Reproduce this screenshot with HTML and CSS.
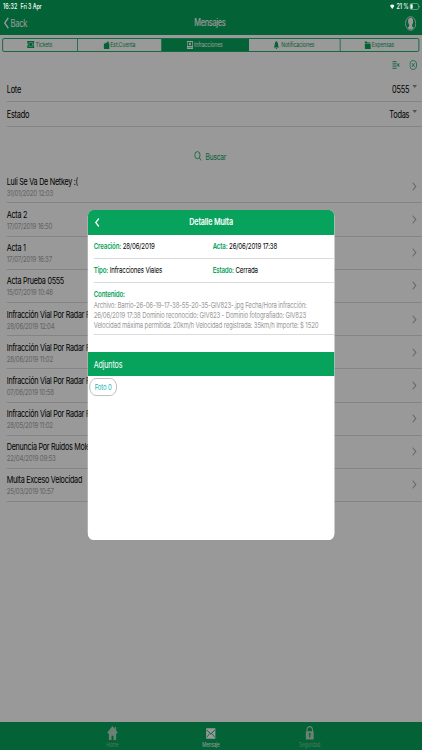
FILE: index.html
```html
<!DOCTYPE html>
<html lang="es">
<head>
<meta charset="utf-8">
<title>Mensajes</title>
<link rel="stylesheet" href="styles.css">
</head>
<body>
<div class="app">
  <header class="top">
    <div class="status"><span class="time">16:32</span><span class="date">Fri 3 Apr</span>
      <svg class="wifi" viewBox="0 0 10 8"><path d="M0 2.6Q5-1.6 10 2.6L5 8Z"/></svg>
      <span class="pct">21 %</span>
      <svg class="battery" viewBox="0 0 28 14"><rect x="1" y="1" width="23" height="12" rx="3.5" fill="none" stroke="#9cc2ad" stroke-width="1.3"/><rect x="2.5" y="2.5" width="6" height="9" rx="1.5" fill="#fff"/><path d="M26 5v4q1.5-.5 1.5-2T26 5" fill="#9cc2ad"/></svg>
    </div>
    <div class="nav">
      <div class="back"><svg viewBox="0 0 8 14"><path d="M7 1 1.5 7 7 13" fill="none" stroke="#fff" stroke-width="1.9"/></svg><span>Back</span></div>
      <h1>Mensajes</h1>
      <svg class="user" viewBox="0 0 16 16"><circle cx="8" cy="8" r="7.3" fill="none" stroke="#fff" stroke-width=".9"/><path d="M8 1.900c-2.700 0-3.700 1.700-3.600 3.900.1 1.700.9 2.800 1.500 3.500v1.700l-2.200 1.500Q5.500 14.500 8 14.500t4.300-2L10.100 11V9.300c.6-.7 1.400-1.800 1.500-3.500.1-2.200-.9-3.900-3.600-3.900Z" fill="#fff"/></svg>
    </div>
  </header>

  <nav class="tabs">
    <a class="tab t1"><svg viewBox="0 0 16 12"><path fill-rule="evenodd" d="M0 0h16v3.500q-1.500.3-1.500 2.500t1.500 2.500V12H0V8.500Q1.500 8.200 1.500 6T0 3.500ZM3.500 2.500v7h9v-7Zm1 1h7v5h-7Z"/></svg><span>Tickets</span></a>
    <a class="tab t2"><svg viewBox="0 0 16 16"><path d="M1 5h3l2-2 2 1 3-4 3 3-1 2h3v11H2Q0 16 0 14V6Z"/></svg><span>Est.Cuenta</span></a>
    <a class="tab t3 active"><svg viewBox="0 0 16 16"><path fill-rule="evenodd" d="M0 0h16v16H0ZM2 2v8h12V2ZM2 12v1h12v-1Z"/><circle cx="8" cy="6" r="2.800"/></svg><span>Infracciones</span></a>
    <a class="tab t4"><svg viewBox="0 0 14 16"><path d="M7 0Q8.500 0 8.500 1.500 11.500 2.500 11.500 7q0 4 2.500 6H0q2.500-2 2.500-6Q2.500 2.500 5.500 1.500 5.500 0 7 0ZM5 14h4q0 2-2 2t-2-2Z"/></svg><span>Notificaciones</span></a>
    <a class="tab t5"><svg viewBox="0 0 16 16"><path d="M0 1h6l1 2h8v2H0Zm0 5h16v10H1L0 14Z"/></svg><span>Expensas</span></a>
  </nav>

  <div class="tools">
    <svg class="clear" viewBox="0 0 14 12"><path d="M0 1h8M0 4.300h8M0 7.600h8M0 11h8M9.500 3.700l4 4.600M13.500 3.700l-4 4.600"/></svg>
    <svg class="close" viewBox="0 0 14 14"><circle cx="7" cy="7" r="6.200"/><path d="m4.500 4.500 5 5m0-5-5 5"/></svg>
  </div>

  <section class="filters">
    <div class="filter"><span>Lote</span><span class="value">0555</span><i class="caret"></i></div>
    <div class="filter"><span>Estado</span><span class="value">Todas</span><i class="caret"></i></div>
  </section>

  <div class="search"><svg viewBox="0 0 12 12"><circle cx="5" cy="5" r="4.300"/><path d="m8 8 3.500 3.500"/></svg><span>Buscar</span></div>

  <ul class="list">
    <li><div><b>Luli Se Va De Netkey :(</b><small>31/01/2020 12:03</small></div><svg viewBox="0 0 7 10"><path d="m1 .7 4.700 4.300L1 9.300"/></svg></li>
    <li><div><b>Acta 2</b><small>17/07/2019 16:50</small></div><svg viewBox="0 0 7 10"><path d="m1 .7 4.700 4.300L1 9.300"/></svg></li>
    <li><div><b>Acta 1</b><small>17/07/2019 16:37</small></div><svg viewBox="0 0 7 10"><path d="m1 .7 4.700 4.300L1 9.300"/></svg></li>
    <li><div><b>Acta Prueba 0555</b><small>15/07/2019 10:46</small></div><svg viewBox="0 0 7 10"><path d="m1 .7 4.700 4.300L1 9.300"/></svg></li>
    <li><div><b>Infracción Vial Por Radar F</b><small>28/06/2019 12:04</small></div><svg viewBox="0 0 7 10"><path d="m1 .7 4.700 4.300L1 9.300"/></svg></li>
    <li><div><b>Infracción Vial Por Radar F</b><small>28/06/2019 11:02</small></div><svg viewBox="0 0 7 10"><path d="m1 .7 4.700 4.300L1 9.300"/></svg></li>
    <li><div><b>Infracción Vial Por Radar F</b><small>07/06/2019 10:58</small></div><svg viewBox="0 0 7 10"><path d="m1 .7 4.700 4.300L1 9.300"/></svg></li>
    <li><div><b>Infracción Vial Por Radar F</b><small>28/05/2019 11:02</small></div><svg viewBox="0 0 7 10"><path d="m1 .7 4.700 4.300L1 9.300"/></svg></li>
    <li><div><b>Denuncia Por Ruidos Mole</b><small>22/04/2019 09:53</small></div><svg viewBox="0 0 7 10"><path d="m1 .7 4.700 4.300L1 9.300"/></svg></li>
    <li><div><b>Multa Exceso Velocidad</b><small>25/03/2019 10:57</small></div><svg viewBox="0 0 7 10"><path d="m1 .7 4.700 4.300L1 9.300"/></svg></li>
  </ul>

  <footer class="bar">
    <div class="item"><svg viewBox="0 0 16 16"><path d="M8 0 0 7.500 1.200 9 2.500 8v8h4v-5h3v5h4V8l1.300 1L16 7.500 13.500 5V1h-2v2.300Z"/></svg><span>Home</span></div>
    <div class="item on"><svg viewBox="0 0 16 16"><path fill-rule="evenodd" d="M1 2.500h14v12H1ZM2 4v1l6 5 6-5V4L8 8.500ZM2 13.500 6 9.500l-.7-.6L2 12.300Zm12 0v-1.200l-3.300-3.400-.7.6Z"/></svg><span>Mensaje</span></div>
    <div class="item"><svg viewBox="0 0 16 16"><path fill-rule="evenodd" d="M3 6V4.500C3 1.500 5 0 8 0s5 1.500 5 4.500V6h1v9.500H2V6Zm1.700 0h6.600V4.500C11.300 2.500 10 1.400 8 1.400S4.700 2.500 4.700 4.500ZM8 8q-1.500 0-1.500 1.300l.7 1V13h1.600v-2.700l.7-1Q9.500 8 8 8Z"/></svg><span>Seguridad</span></div>
  </footer>

  <div class="shade"></div>

  <section class="modal">
    <header><svg viewBox="0 0 7 10"><path d="M6 .7 1.500 5 6 9.300"/></svg><h2>Detalle Multa</h2></header>
    <div class="pair"><p><em>Creación:</em> 28/06/2019</p><p><em>Acta:</em> 26/06/2019 17:38</p></div>
    <div class="pair"><p><em>Tipo:</em> Infracciones Viales</p><p><em>Estado:</em> Cerrada</p></div>
    <div class="content"><em>Contenido:</em>
      <p>Archivo: Barrio-26-06-19-17-38-55-20-35-GIV823-.jpg Fecha/Hora infracción:<br>26/06/2019 17:38 Dominio reconocido: GIV823 - Dominio fotografiado: GIV823<br>Velocidad máxima permitida: 20km/h Velocidad registrada: 35km/h Importe: $ 1520</p>
    </div>
    <h3>Adjuntos</h3>
    <button class="chip">Foto 0</button>
  </section>
</div>
</body>
</html>
```
FILE: styles.css
```css
* { box-sizing: border-box; margin: 0; padding: 0; }
html, body { width: 422px; height: 750px; overflow: hidden; background: #999; }
/* 3:4 canvas compressed horizontally to the window width */
.app {
  position: relative; width: 562.67px; margin-right: -140.67px; height: 750px;
  display: flex; flex-direction: column;
  transform: scaleX(.75); transform-origin: 0 0;
  background: #fff; color: #000;
  font-family: Inter, "Liberation Sans", sans-serif; font-size: 10px; line-height: 12px;
  white-space: nowrap; overflow: hidden;
}
svg { display: block; flex: none; }
em { font-style: normal; }

.top { height: 35px; background: #07a35c; color: #fff; flex: none; }
.status {
  position: relative; z-index: 3; height: 11px; padding: 1px 3px 0 4px;
  display: flex; align-items: center; font-size: 7.200px; font-weight: 500; line-height: 9px;
}
.time { letter-spacing: .02em; }
.date { margin-left: 4px; letter-spacing: -.02em; }
.wifi { width: 6px; height: 5px; fill: #fff; margin-left: auto; }
.pct { margin: 0 1px 0 3px; font-size: 7.300px; letter-spacing: -.03em; }
.battery { width: 14px; height: 7px; }
.nav { height: 24px; display: grid; grid-template-columns: 1fr auto 1fr; align-items: center; padding: 0 8px 0 5px; }
.back { display: flex; align-items: center; gap: 2px; font-size: 10.200px; letter-spacing: -.04em; }
.back svg { width: 7px; height: 12px; }
.nav h1 { font-size: 9.800px; font-weight: 500; letter-spacing: -.045em; }
.user { width: 15px; height: 15px; justify-self: end; }

.tabs { flex: none; height: 14px; margin: 2.500px 3.500px 0 2.500px; border: 1px solid #07a35c; border-radius: 2px; display: flex; overflow: hidden; }
.tab { display: flex; align-items: center; justify-content: center; gap: 1px; color: #07a35c; font-size: 6.800px; letter-spacing: -.02em; line-height: 12px; border-right: 1px solid #07a35c; }
.tab svg { height: 8px; width: 8.500px; fill: currentColor; }
.t1 svg { width: 10px; height: 7px; }
.t1 { width: 100px; } .t2 { width: 112px; } .t3 { width: 116px; } .t4 { width: 122px; } .t5 { flex: 1; border: 0; }
.t4 svg { width: 7px; margin-right: 2px; }
.active { background: #07a35c; color: #fff; }

.tools { flex: none; height: 25px; display: flex; justify-content: flex-end; align-items: center; gap: 12px; padding: 2px 7px 0 0; fill: none; stroke: #07a35c; }
.clear { width: 12px; height: 8px; stroke-width: 1.500; }
.close { width: 10px; height: 10px; stroke-width: 1.200; }

.filters { flex: none; }
.filter { height: 25px; margin-left: 9px; padding-right: 6px; border-bottom: 1px solid #dcdce0; display: flex; align-items: center; font-size: 9.900px; letter-spacing: -.035em; }
.value { margin-left: auto; }
.caret { border: 3px solid transparent; border-top: 3.500px solid #8a8a8a; border-bottom: 0; margin: -4px 1px 0 4px; }

.search { flex: none; height: 43.700px; padding: 24px 2px 0 0; display: flex; justify-content: center; align-items: flex-start; gap: 5px; color: #07a35c; font-size: 8.900px; letter-spacing: -.035em; }
.search svg { width: 10px; height: 10px; fill: none; stroke: currentColor; stroke-width: 1.100; }

.list { list-style: none; flex: none; }
.list li { height: 33.200px; margin-left: 9px; padding-right: 7px; border-bottom: 1px solid #dcdce0; display: flex; justify-content: space-between; align-items: center; }
.list b { display: block; padding-top: 1px; font-size: 9.600px; letter-spacing: -.037em; font-weight: 400; line-height: 12px; }
.list small { display: block; font-size: 8.100px; letter-spacing: -.03em; line-height: 10px; color: #a4a4a4; }
.list svg { width: 7px; height: 9px; fill: none; stroke: #aaa; stroke-width: 1.300; }

.bar { margin-top: auto; height: 28px; background: #07a35c; display: flex; justify-content: center; color: #83c9a5; flex: none; }
.item { width: 131.500px; display: flex; flex-direction: column; align-items: center; padding-top: 4px; font-size: 6px; letter-spacing: -.02em; line-height: 8px; }
.item svg { width: 14px; height: 14px; fill: #b4d8c4; margin-bottom: 1px; }
.on, .on svg { color: #fff; fill: #fff; }

.shade { position: absolute; inset: 0; z-index: 2; background: rgba(0, 0, 0, .4); }

.modal { position: absolute; z-index: 4; left: 117px; top: 210px; width: 329px; height: 330px; background: #fff; border-radius: 7px; overflow: hidden; font-size: 8.200px; letter-spacing: -.025em; }
.modal header { height: 24.500px; background: #07a35c; color: #fff; display: grid; grid-template-columns: 1fr auto 1fr; align-items: center; padding-left: 9px; padding-right: 9px; }
.modal header svg { width: 7px; height: 9px; fill: none; stroke: #fff; stroke-width: 1.700; }
.modal h2 { font-size: 9.600px; font-weight: 600; }
.modal em { color: #07a35c; font-weight: 600; }
.pair { height: 24px; margin-left: 8px; border-bottom: 1px solid #dcdcdf; display: grid; grid-template-columns: 158.500px 1fr; align-items: center; }
.content { height: 52px; margin-left: 8px; border-bottom: 1px solid #dcdcdf; padding-top: 5px; line-height: 12px; }
.content p { font-size: 8.100px; letter-spacing: -.243px; line-height: 10px; color: #999; }
.modal h3 { height: 24px; margin-top: 17.500px; background: #07a35c; color: #fff; padding-left: 8px; font-size: 9.500px; font-weight: 400; line-height: 25px; }
.chip { display: block; margin: 2px 0 0 2px; width: 37px; height: 18px; border: 1px solid #b5b5b5; border-radius: 9px; background: #fff; color: #17b6ad; font: 8px/16px Inter, sans-serif; letter-spacing: -.03em; }
```
